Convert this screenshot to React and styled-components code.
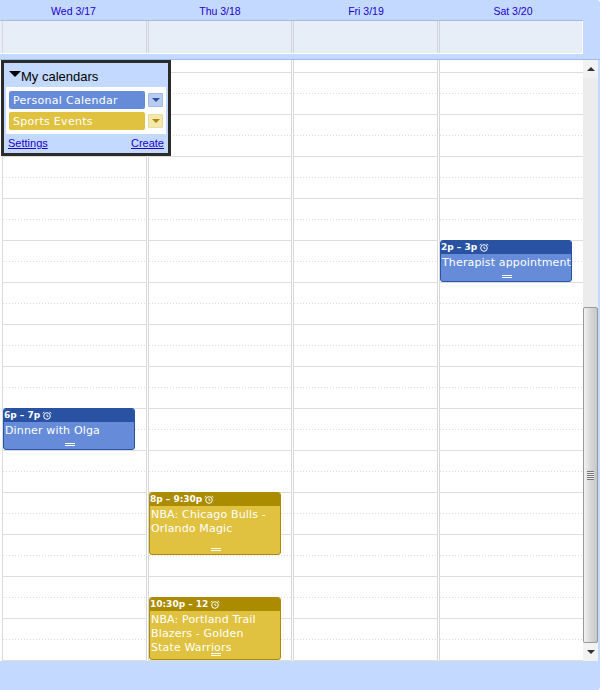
import React from 'react';
import styled, { createGlobalStyle } from 'styled-components';

const HOUR = 42;

const DAYS = ['Wed 3/17', 'Thu 3/18', 'Fri 3/19', 'Sat 3/20'];

const CALENDARS = [
    { name: 'Personal Calendar', tone: 'blue' },
    { name: 'Sports Events', tone: 'gold' },
];

const TONES = {
    blue: { head: '#2952a3', body: '#668cd9', soft: '#b9cbee', edge: '#a3b9e6', arrow: '#2952a3' },
    gold: { head: '#ab8b00', body: '#e0c240', soft: '#f5e8ae', edge: '#ecdc9a', arrow: '#ab8b00' },
};

const EVENTS = [
    { day: 0, top: 348, height: 42, time: '6p – 7p', title: 'Dinner with Olga', tone: 'blue' },
    { day: 1, top: 432, height: 63, time: '8p – 9:30p', title: 'NBA: Chicago Bulls -\nOrlando Magic', tone: 'gold' },
    { day: 1, top: 537, height: 63, time: '10:30p – 12', title: 'NBA: Portland Trail\nBlazers - Golden\nState Warriors', tone: 'gold' },
    { day: 3, top: 180, height: 42, time: '2p – 3p', title: 'Therapist appointment', tone: 'blue' },
];

const GlobalStyle = createGlobalStyle`
    html, body {
        margin: 0;
        padding: 0;
        background: #fff;
    }
    body {
        width: 600px;
        height: 690px;
        overflow: hidden;
        font-family: "Liberation Sans", Arial, sans-serif;
    }
`;

const Page = styled.div`
    display: flex;
    flex-direction: column;
    width: 600px;
    height: 690px;
    background: #c3d9ff;
    border-radius: 0 3px 3px 0;
`;

const DayHeader = styled.div`
    display: grid;
    grid-template-columns: 147px 146px 146px 148px;
    width: 583px;
    height: 20px;
    border-bottom: 1px solid #9fbce8;
`;

const DayName = styled.div`
    text-align: center;
    font-size: 10.5px;
    line-height: 23px;
    color: #2200cc;
`;

const AllDayRow = styled.div`
    display: grid;
    grid-template-columns: 146px 145px 146px 146px;
    width: 582px;
    height: 32px;
    margin-bottom: 5px;
    background: #e8eef7;
    border-bottom: 1px solid #fff;
    border-right: 1px solid #fff;
`;

const AllDayCell = styled.div`
    box-sizing: border-box;
    margin-left: ${(p) => (p.$first ? '2px' : '0')};
    border-left: ${(p) => (p.$first ? '1px solid #d5dae2' : '3px double #d0d5dd')};
`;

const GridArea = styled.div`
    display: flex;
    height: 601px;
    border-top: 1px solid #9fbce8;
    margin-bottom: 28px;
`;

const TimeGrid = styled.div`
    position: relative;
    display: grid;
    grid-template-columns: 146px 145px 146px 146px;
    width: 583px;
    height: 601px;
    background: #fff;
    overflow: hidden;
`;

const HourLines = styled.div`
    display: flex;
    flex-direction: column;
    width: 100%;
    margin-top: -29px;
`;

const HourRow = styled.div`
    flex: none;
    height: ${HOUR}px;
    box-sizing: border-box;
    border-bottom: 1px solid #dddddd;
    background-image: repeating-linear-gradient(to right, #dddddd 0 1px, transparent 1px 3px);
    background-repeat: no-repeat;
    background-size: 100% 1px;
    background-position: 0 20px;
`;

const DayColumn = styled.div`
    position: relative;
    box-sizing: border-box;
    margin-left: ${(p) => (p.$first ? '2px' : '0')};
    border-left: ${(p) => (p.$first ? '1px solid #dddddd' : '3px double #d8d8d8')};
    height: 601px;
`;

const EventCard = styled.div`
    position: absolute;
    left: 0;
    top: ${(p) => p.$top}px;
    width: 132px;
    height: ${(p) => p.$height}px;
    box-sizing: border-box;
    overflow: hidden;
    color: #fff;
    background: ${(p) => TONES[p.$tone].body};
    border: 1px solid ${(p) => TONES[p.$tone].head};
    border-radius: 3px;
`;

const EventHead = styled.div`
    display: flex;
    align-items: center;
    gap: 2px;
    height: 13px;
    background: ${(p) => TONES[p.$tone].head};
    font-family: "DejaVu Sans", Verdana, sans-serif;
    font-weight: 700;
    font-size: 9px;
    line-height: 13px;
    white-space: nowrap;
`;

const EventTitle = styled.div`
    padding: 2px 0 0 1px;
    font-family: "DejaVu Sans", Verdana, sans-serif;
    font-size: 11px;
    letter-spacing: 0.15px;
    line-height: 14px;
    white-space: pre-line;
`;

const Grip = styled.div`
    position: absolute;
    left: 50%;
    bottom: 3px;
    width: 10px;
    height: 3px;
    margin-left: -4px;
    border-top: 1px solid #fff;
    border-bottom: 1px solid #fff;
    box-sizing: border-box;
`;

const CalendarPanel = styled.div`
    position: absolute;
    left: 1px;
    top: 0;
    width: 170px;
    height: 96px;
    box-sizing: border-box;
    border: 3px solid #2b2b2b;
    background: #c3d9ff;
    z-index: 2;
`;

const PanelTitle = styled.div`
    display: flex;
    align-items: center;
    height: 24px;
    box-sizing: border-box;
    padding: 2px 0 0 5px;
    font-size: 13px;
    color: #000;
`;

const Triangle = styled.span`
    width: 0;
    height: 0;
    margin-top: -5px;
    border-left: 6px solid transparent;
    border-right: 6px solid transparent;
    border-top: 6px solid #000;
`;

const CalendarList = styled.div`
    display: flex;
    flex-direction: column;
    gap: 3px;
    margin: 0 2px;
    padding: 4px 0 4px;
    height: 47px;
    box-sizing: border-box;
    background: #fff;
`;

const CalendarRow = styled.div`
    display: flex;
    align-items: center;
    gap: 3px;
    padding: 0 3px;
`;

const CalendarChip = styled.div`
    width: 136px;
    height: 18px;
    padding-left: 4px;
    box-sizing: border-box;
    border-radius: 2px;
    background: ${(p) => TONES[p.$tone].body};
    color: #fff;
    font-family: "DejaVu Sans", Verdana, sans-serif;
    font-size: 11px;
    letter-spacing: 0.3px;
    line-height: 19px;
`;

const MenuButton = styled.div`
    display: flex;
    align-items: center;
    justify-content: center;
    width: 15px;
    height: 14px;
    box-sizing: border-box;
    border: 1px solid ${(p) => TONES[p.$tone].edge};
    border-radius: 1px;
    background: ${(p) => TONES[p.$tone].soft};
`;

const MenuArrow = styled.span`
    width: 0;
    height: 0;
    border-left: 4px solid transparent;
    border-right: 4px solid transparent;
    border-top: 4px solid ${(p) => TONES[p.$tone].arrow};
`;

const PanelLinks = styled.div`
    display: flex;
    justify-content: space-between;
    padding: 3px 4px 0 4px;
    font-size: 11px;
    line-height: 13px;
`;

const PanelLink = styled.a`
    color: #2200cc;
    text-decoration: underline;
`;

const Scrollbar = styled.div`
    display: flex;
    flex-direction: column;
    width: 15px;
    height: 601px;
    background: #ececec;
`;

const ScrollArrow = styled.div`
    display: flex;
    align-items: center;
    justify-content: center;
    flex: none;
    height: 18px;
    background: #f2f2f2;
`;

const ArrowGlyph = styled.span`
    width: 0;
    height: 0;
    border-left: 4px solid transparent;
    border-right: 4px solid transparent;
    ${(p) => (p.$up ? 'border-bottom: 4px solid #333;' : 'border-top: 4px solid #333;')}
`;

const ScrollTrack = styled.div`
    flex: 1;
    display: flex;
    flex-direction: column;
    justify-content: flex-end;
`;

const ScrollThumb = styled.div`
    display: flex;
    align-items: center;
    justify-content: center;
    height: 336px;
    box-sizing: border-box;
    border: 1px solid #9a9a9a;
    border-radius: 2px;
    background: linear-gradient(to right, #f2f2f2, #dcdcdc 40%, #c6c6c6);
`;

const ThumbGrip = styled.div`
    width: 7px;
    height: 9px;
    background: repeating-linear-gradient(#777 0 1px, #eee 1px 2px);
`;

const HOURS = Array.from({ length: 16 }, (_, i) => i);

const App = () => {
    return (
        <Page>
            <GlobalStyle />
            <DayHeader>
                {DAYS.map((day) => (
                    <DayName key={day}>{day}</DayName>
                ))}
            </DayHeader>
            <AllDayRow>
                {DAYS.map((day, d) => (
                    <AllDayCell key={day} $first={d === 0} />
                ))}
            </AllDayRow>
            <GridArea>
                <TimeGrid>
                    {DAYS.map((day, d) => (
                        <DayColumn key={day} $first={d === 0}>
                            <HourLines>
                                {HOURS.map((h) => (
                                    <HourRow key={h} />
                                ))}
                            </HourLines>
                            {EVENTS.filter((ev) => ev.day === d).map((ev) => (
                                <EventCard key={ev.time} $top={ev.top} $height={ev.height} $tone={ev.tone}>
                                    <EventHead $tone={ev.tone}>
                                        {ev.time}
                                        <svg width="10" height="10" viewBox="0 0 10 10" fill="none" stroke="#fff" strokeWidth="1">
                                            <circle cx="5" cy="5" r="3.3" />
                                            <path d="M5 3.5v1.8h1.4M0.8 2.4 2.4 0.8M9.2 2.4 7.6 0.8" />
                                        </svg>
                                    </EventHead>
                                    <EventTitle>{ev.title}</EventTitle>
                                    <Grip />
                                </EventCard>
                            ))}
                        </DayColumn>
                    ))}
                    <CalendarPanel>
                        <PanelTitle>
                            <Triangle />
                            My calendars
                        </PanelTitle>
                        <CalendarList>
                            {CALENDARS.map((cal) => (
                                <CalendarRow key={cal.name}>
                                    <CalendarChip $tone={cal.tone}>{cal.name}</CalendarChip>
                                    <MenuButton $tone={cal.tone}>
                                        <MenuArrow $tone={cal.tone} />
                                    </MenuButton>
                                </CalendarRow>
                            ))}
                        </CalendarList>
                        <PanelLinks>
                            <PanelLink>Settings</PanelLink>
                            <PanelLink>Create</PanelLink>
                        </PanelLinks>
                    </CalendarPanel>
                </TimeGrid>
                <Scrollbar>
                    <ScrollArrow>
                        <ArrowGlyph $up />
                    </ScrollArrow>
                    <ScrollTrack>
                        <ScrollThumb>
                            <ThumbGrip />
                        </ScrollThumb>
                    </ScrollTrack>
                    <ScrollArrow>
                        <ArrowGlyph />
                    </ScrollArrow>
                </Scrollbar>
            </GridArea>
        </Page>
    );
};

export default App;
